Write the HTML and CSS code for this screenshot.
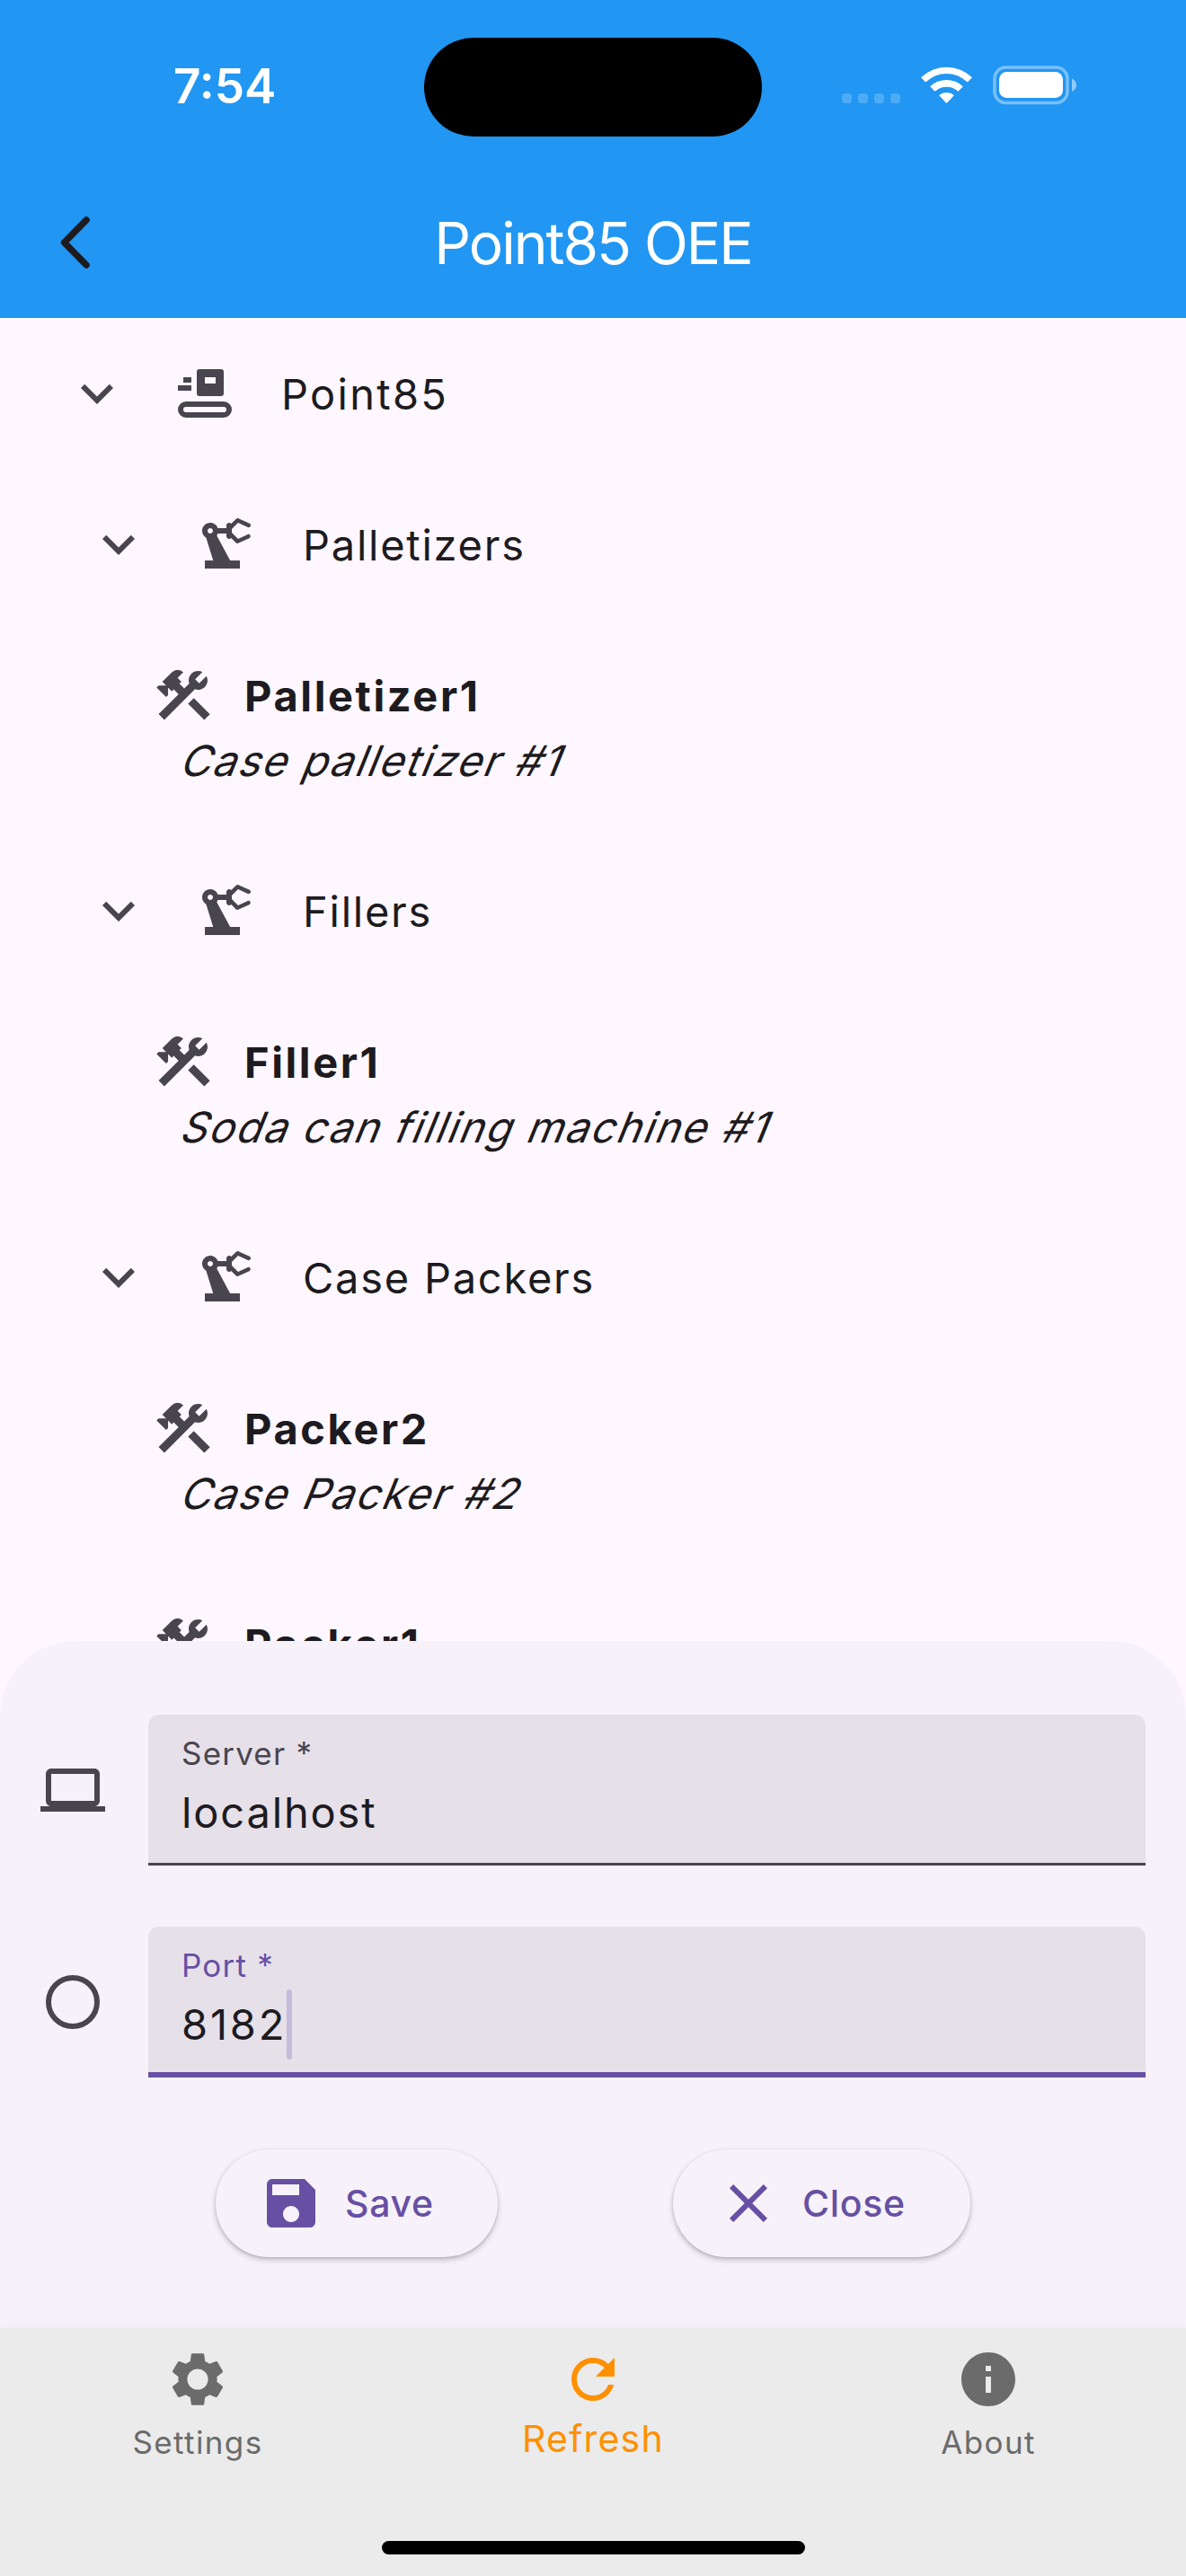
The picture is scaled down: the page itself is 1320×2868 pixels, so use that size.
FILE: index.html
```html
<!DOCTYPE html>
<html lang="en">
<head>
<meta charset="utf-8">
<title>Point85 OEE</title>
<link rel="stylesheet" href="styles.css">
</head>
<body>
<svg class="defs" width="0" height="0">
  <symbol id="chevron" viewBox="0 0 24 24"><path d="M16.59 8.59 12 13.17 7.41 8.59 6 10l6 6 6-6z"/></symbol>
  <symbol id="robot" viewBox="0 0 24 24"><path d="M19.93 8.35l-3.6 1.68L14 7.7V6.3l2.33-2.33 3.6 1.68c.38.18.82.01 1-.36.18-.38.01-.82-.36-1l-3.92-1.83c-.38-.18-.83-.1-1.13.2L13.78 4.3C13.6 4.12 13.32 4 13 4c-.55 0-1 .45-1 1v1H8.82C8.4 4.84 7.3 4 6 4 4.34 4 3 5.34 3 7c0 1.1.6 2.05 1.48 2.58L7.08 18H4v3h13v-3h-3.62L8.41 8.77c.17-.24.31-.49.41-.77H12v1c0 .55.45 1 1 1 .32 0 .6-.12.78-.3l1.64 1.64c.3.3.76.38 1.14.2l3.93-1.83c.38-.18.54-.62.36-1-.18-.38-.62-.55-1-.36zM6 8c-.55 0-1-.45-1-1s.45-1 1-1 1 .45 1 1-.45 1-1 1z"/></symbol>
  <symbol id="tools" viewBox="0 0 24 24"><path d="m13.783 15.172 2.121-2.121 5.996 5.996-2.121 2.121zM17.5 10c1.93 0 3.5-1.57 3.5-3.5 0-.58-.16-1.12-.41-1.6l-2.7 2.7-1.49-1.49 2.7-2.7c-.48-.25-1.02-.41-1.6-.41C15.57 3 14 4.57 14 6.5c0 .41.08.8.21 1.16l-1.85 1.85-1.78-1.78.71-.71-1.41-1.41L12 3.49a3 3 0 0 0-4.24 0L4.22 7.03l1.41 1.41H2.81l-.71.71 3.54 3.54.71-.71V9.15l1.41 1.41.71-.71 1.78 1.78-7.41 7.41 2.12 2.12L16.34 9.79c.36.13.75.21 1.16.21z"/></symbol>
</svg>
<div class="screen">
  <header class="header">
    <div class="status">
      <span class="time">7:54</span>
      <span class="island"></span>
      <svg class="status-icons" viewBox="0 0 262 44" width="262" height="44">
        <g fill="#fff" fill-opacity=".2"><rect x="0" y="31" width="11" height="11" rx="3.5"/><rect x="18" y="31" width="11" height="11" rx="3.5"/><rect x="36" y="31" width="11" height="11" rx="3.5"/><rect x="54" y="31" width="11" height="11" rx="3.5"/></g>
        <g fill="#fff"><path d="M88 13.2a41 41 0 0 1 57 0l-5.2 5.3a33.3 33.3 0 0 0-46.6 0z"/><path d="M98.2 23.3a26.4 26.4 0 0 1 36.6 0l-5.3 5.5a19 19 0 0 0-26 0z"/><path d="M108.2 33.2a12.3 12.3 0 0 1 16.6 0L116.500 42z"/></g>
        <rect x="170" y="2" width="81" height="39.500" rx="12.500" fill="none" stroke="#fff" stroke-opacity=".4" stroke-width="3.500"/>
        <rect x="175" y="7" width="71" height="29" rx="8.500" fill="#fff"/>
        <path d="M256 14.500c3 1.200 5 4 5 7.200s-2 6-5 7.200z" fill="#fff" fill-opacity=".5"/>
      </svg>
    </div>
    <div class="appbar">
      <svg class="back" viewBox="0 0 33 58" width="33" height="58"><path d="M29 4 4.500 29 29 54" fill="none" stroke="#1d1b20" stroke-width="7.500" stroke-linecap="round" stroke-linejoin="round"/></svg>
      <h1 class="title">Point85 OEE</h1>
    </div>
  </header>

  <main class="tree">
    <div class="node root"><svg class="ic"><use href="#chevron"/></svg>
      <svg class="ic kind" viewBox="0 0 72 72"><path fill-rule="evenodd" d="M30 9h24a3 3 0 0 1 3 3v24a3 3 0 0 1-3 3H30a3 3 0 0 1-3-3V12a3 3 0 0 1 3-3zm6 9v7h12v-7z"/><path d="M12 18h9v6h-9zM6 27h15v6H6z"/><rect x="9" y="48" width="54" height="12" rx="6" fill="none" stroke="#49454f" stroke-width="6"/></svg>
      <span class="name">Point85</span></div>
    <div class="node"><svg class="ic"><use href="#chevron"/></svg><svg class="ic kind"><use href="#robot"/></svg><span class="name">Palletizers</span></div>
    <div class="leaf"><div class="leaf-head"><svg class="ic"><use href="#tools"/></svg><b class="leaf-name">Palletizer1</b></div><div class="desc"><span class="slant">Case palletizer #1</span></div></div>
    <div class="node"><svg class="ic"><use href="#chevron"/></svg><svg class="ic kind"><use href="#robot"/></svg><span class="name">Fillers</span></div>
    <div class="leaf"><div class="leaf-head"><svg class="ic"><use href="#tools"/></svg><b class="leaf-name">Filler1</b></div><div class="desc"><span class="slant">Soda can filling machine #1</span></div></div>
    <div class="node"><svg class="ic"><use href="#chevron"/></svg><svg class="ic kind"><use href="#robot"/></svg><span class="name">Case Packers</span></div>
    <div class="leaf"><div class="leaf-head"><svg class="ic"><use href="#tools"/></svg><b class="leaf-name">Packer2</b></div><div class="desc"><span class="slant">Case Packer #2</span></div></div>
    <div class="leaf"><div class="leaf-head"><svg class="ic"><use href="#tools"/></svg><b class="leaf-name">Packer1</b></div></div>
  </main>

  <section class="sheet">
    <div class="row">
      <svg class="ic" viewBox="0 0 24 24"><path d="M20 18c1.1 0 2-.9 2-2V6c0-1.100-.9-2-2-2H4c-1.100 0-2 .9-2 2v10c0 1.100.9 2 2 2H0v2h24v-2zM4 6h16v10H4z"/></svg>
      <div class="field"><span class="label">Server *</span><span class="value">localhost</span></div>
    </div>
    <div class="row">
      <svg class="ic" viewBox="0 0 24 24"><circle cx="12" cy="12" r="9" fill="none" stroke="#49454f" stroke-width="2"/></svg>
      <div class="field focused"><span class="label">Port *</span><span class="value port">8182<i class="caret"></i></span></div>
    </div>
    <div class="actions">
      <div class="btn save"><svg class="ic" viewBox="0 0 24 24"><path d="M17 3H5c-1.110 0-2 .9-2 2v14c0 1.100.89 2 2 2h14c1.100 0 2-.9 2-2V7zm-5 16c-1.660 0-3-1.340-3-3s1.340-3 3-3 3 1.340 3 3-1.340 3-3 3zm3-10H5V5h10z"/></svg><span class="btn-text">Save</span></div>
      <div class="btn close"><svg class="ic" viewBox="0 0 24 24"><path d="M19 6.410 17.590 5 12 10.590 6.410 5 5 6.410 10.590 12 5 17.590 6.410 19 12 13.410 17.590 19 19 17.590 13.410 12z"/></svg><span class="btn-text">Close</span></div>
    </div>
  </section>

  <nav class="nav">
    <div class="tab"><svg class="ic" viewBox="0 0 24 24"><path d="M19.140 12.940c.04-.3.060-.61.060-.94 0-.32-.020-.64-.070-.94l2.030-1.580c.18-.14.230-.41.120-.61l-1.920-3.320c-.12-.22-.37-.29-.59-.22l-2.390.96c-.5-.38-1.030-.7-1.620-.94l-.36-2.540c-.04-.24-.24-.41-.48-.41h-3.840c-.24 0-.43.17-.47.41l-.36 2.540c-.59.24-1.130.57-1.620.94l-2.390-.96c-.22-.08-.47 0-.59.22L2.740 8.870c-.12.21-.08.47.12.61l2.030 1.580c-.05.3-.09.63-.09.940s.020.640.070.940l-2.030 1.580c-.18.140-.23.410-.12.610l1.920 3.320c.12.220.370.290.590.220l2.390-.96c.5.380 1.030.7 1.620.940l.36 2.540c.05.240.240.410.480.410h3.840c.240 0 .440-.170.470-.410l.36-2.540c.590-.240 1.130-.560 1.620-.940l2.390.960c.220.080.470 0 .590-.220l1.920-3.320c.120-.220.070-.470-.120-.610zM12 15.850a3.850 3.850 0 1 1 0-7.700 3.850 3.850 0 0 1 0 7.700z"/></svg><span class="tab-text settings">Settings</span></div>
    <div class="tab active"><svg class="ic" viewBox="0 0 24 24"><path d="M17.650 6.350A7.958 7.958 0 0 0 12 4c-4.420 0-7.990 3.580-7.990 8s3.570 8 7.990 8c3.730 0 6.840-2.550 7.730-6h-2.080A5.990 5.990 0 0 1 12 18c-3.310 0-6-2.690-6-6s2.690-6 6-6c1.660 0 3.140.690 4.220 1.780L13 11h7V4z"/></svg><span class="tab-text">Refresh</span></div>
    <div class="tab"><svg class="ic" viewBox="0 0 24 24"><path d="M12 2C6.480 2 2 6.480 2 12s4.480 10 10 10 10-4.480 10-10S17.520 2 12 2zm1 15h-2v-6h2zm0-8h-2V7h2z"/></svg><span class="tab-text about">About</span></div>
    <div class="home"></div>
  </nav>
</div>
</body>
</html>
```
FILE: styles.css
```css
* { box-sizing: border-box; }
body { margin: 0; background: #fef7ff; font-family: Inter, "Liberation Sans", sans-serif; color: #1d1b20; }
.defs { display: block; }
.screen { width: 1320px; height: 2868px; display: flex; flex-direction: column; overflow: hidden; }
.ic { width: 72px; height: 72px; flex: none; fill: #49454f; display: block; }

/* Header */
.header { height: 354px; flex: none; background: #2196f3; color: #fff; }
.status { height: 192px; display: grid; grid-template-columns: 472px 376px 1fr; align-items: start; }
.time { margin: 65px 0 0 193px; font-size: 53px; line-height: 63px; font-weight: 600; letter-spacing: 0; }
.island { margin-top: 42px; height: 110px; border-radius: 55px; background: #000; }
.status-icons { margin: 73px 0 0 89px; }
.appbar { height: 162px; display: grid; grid-template-columns: 100px 1fr 100px; align-items: center; }
.back { margin: -6px 0 0 67px; }
.title { margin: -4px 0 0; text-align: center; font-size: 64px; line-height: 78px; font-weight: 400; letter-spacing: -2px; }

/* Equipment tree */
.tree { height: 1473px; flex: none; overflow: hidden; }
.node { height: 168px; padding-left: 96px; display: flex; align-items: center; }
.root { padding-left: 72px; }
.kind { margin-left: 48px; }
.name { margin: 2px 0 0 49px; font-size: 47px; line-height: 72px; letter-spacing: 1.75px; }
.root .name { letter-spacing: 2.3px; }
.leaf { height: 240px; padding: 48px 0 0 168px; }
.leaf-head { display: flex; align-items: center; height: 72px; }
.leaf-name { margin: 2px 0 0 32px; font-size: 47px; line-height: 72px; font-weight: 700; letter-spacing: 2.6px; }
.desc { padding: 1px 0 0 30px; font-size: 47px; line-height: 72px; letter-spacing: 1.85px; }
.slant { display: inline-block; transform: skewX(-22deg); transform-origin: 0 53px; }

/* Connection sheet */
.sheet { position: relative; height: 765px; flex: none; background: #f7f2fa; border-radius: 84px 84px 0 0; padding: 82px 45px 0; }
.row { display: flex; align-items: center; gap: 48px; height: 168px; margin-bottom: 68px; }
.field { flex: 1; height: 168px; background: #e6e0e9; border-radius: 12px 12px 0 0; border-bottom: 3px solid #49454f; padding: 19px 37px 0; display: flex; flex-direction: column; }
.focused { border-bottom: 6px solid #6750a4; }
.label { font-size: 35px; line-height: 48px; letter-spacing: 1.2px; color: #49454f; }
.focused .label { color: #6750a4; }
.value { font-size: 47px; line-height: 78px; letter-spacing: 1.85px; margin-top: 3px; display: flex; align-items: center; }
.port { letter-spacing: 2.8px; }
.caret { width: 6px; height: 78px; border-radius: 3px; background: #c4bbdc; }
.actions { display: flex; justify-content: center; gap: 195px; padding-top: 12px; }
.btn { height: 120px; border-radius: 60px; display: flex; align-items: center; gap: 24px; padding-left: 48px; color: #6750a4; background: #f7f2fa; box-shadow: 0 3px 6px rgba(0,0,0,.22), 0 1px 3px rgba(0,0,0,.12); }
.btn .ic { fill: #6750a4; }
.save { width: 314px; }
.close { width: 331px; }
.btn-text { font-size: 41px; line-height: 60px; font-weight: 500; letter-spacing: .7px; }

/* Bottom navigation */
.nav { height: 276px; flex: none; background: #ebebeb; display: grid; grid-template-columns: repeat(3, 1fr); grid-template-rows: 237px 15px; box-shadow: 0 0 12px rgba(0,0,0,.04); position: relative; color: #6b6b6b; }
.tab { display: flex; flex-direction: column; align-items: center; padding-top: 21px; }
.tab .ic { fill: #6b6b6b; }
.tab-text { font-size: 35px; line-height: 48px; letter-spacing: 1.4px; margin-top: 10px; }
.active .ic { fill: #ff9000; }
.active .tab-text { color: #ff9000; font-size: 41px; letter-spacing: 1.2px; margin-top: 6px; }
.home { grid-column: 1 / -1; justify-self: center; width: 471px; height: 15px; border-radius: 8px; background: #000; }
```
